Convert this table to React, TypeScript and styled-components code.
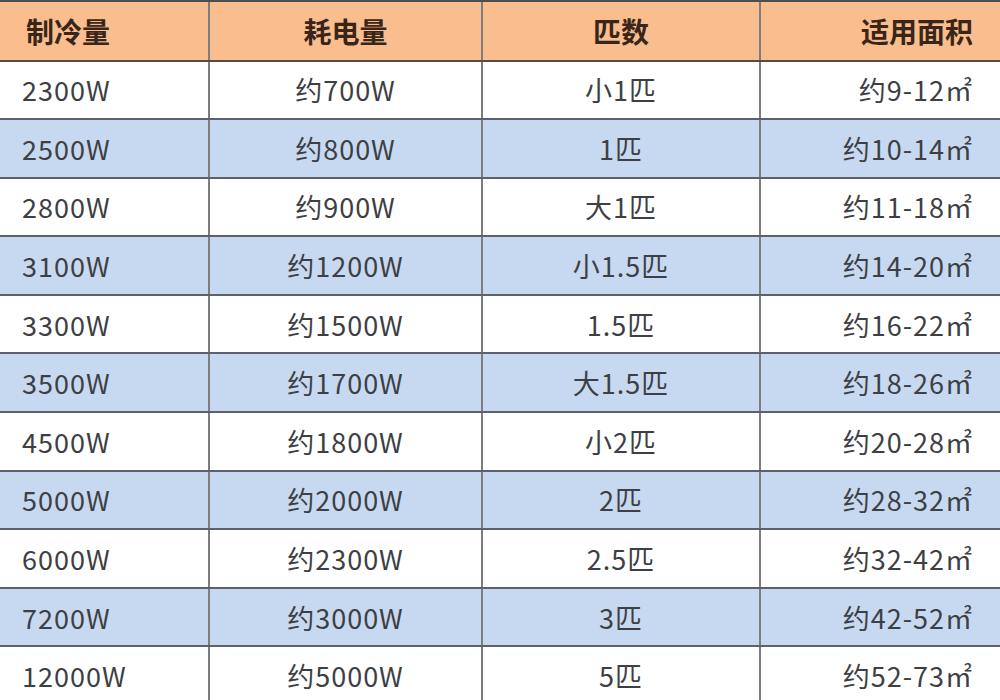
import styled, { createGlobalStyle } from "styled-components";

const GlobalStyle = createGlobalStyle`
  html, body {
    margin: 0;
    padding: 0;
    background: #ffffff;
    overflow: hidden;
  }
`;

type Align = "left" | "center" | "right";

const rows: [string, string, string, string][] = [
  ["2300W", "约700W", "小1匹", "约9-12㎡"],
  ["2500W", "约800W", "1匹", "约10-14㎡"],
  ["2800W", "约900W", "大1匹", "约11-18㎡"],
  ["3100W", "约1200W", "小1.5匹", "约14-20㎡"],
  ["3300W", "约1500W", "1.5匹", "约16-22㎡"],
  ["3500W", "约1700W", "大1.5匹", "约18-26㎡"],
  ["4500W", "约1800W", "小2匹", "约20-28㎡"],
  ["5000W", "约2000W", "2匹", "约28-32㎡"],
  ["6000W", "约2300W", "2.5匹", "约32-42㎡"],
  ["7200W", "约3000W", "3匹", "约42-52㎡"],
  ["12000W", "约5000W", "5匹", "约52-73㎡"],
];

const aligns: Align[] = ["left", "center", "center", "right"];

const Table = styled.div`
  width: 1000px;
  border-top: 2px solid #4d4d4d;
  font-family: "Noto Sans CJK SC", "Noto Sans", sans-serif;
`;

const Row = styled.div<{ $tone: "head" | "blue" | "white" }>`
  display: grid;
  grid-template-columns: 210px 273px 278px 1fr;
  box-sizing: border-box;
  height: ${(p) => (p.$tone === "head" ? "59.5px" : "58.6px")};
  border-bottom: 2px solid ${(p) => (p.$tone === "head" ? "#5a4a40" : "#5b626b")};
  background: ${(p) =>
    p.$tone === "head" ? "#f9bd8e" : p.$tone === "blue" ? "#c6d9f0" : "#ffffff"};
`;

const Cell = styled.div<{ $align: Align; $head?: boolean }>`
  display: flex;
  align-items: center;
  justify-content: ${(p) =>
    p.$align === "left" ? "flex-start" : p.$align === "right" ? "flex-end" : "center"};
  padding: ${(p) =>
    p.$align === "left"
      ? `0 0 0 ${p.$head ? 26 : 22}px`
      : p.$align === "right"
        ? "0 27px 0 0"
        : "0"};
  border-right: 2px solid #7d7d7d;
  font-size: ${(p) => (p.$head ? "28px" : "27px")};
  font-weight: ${(p) => (p.$head ? 700 : 400)};
  letter-spacing: ${(p) => (p.$head ? "0" : "1px")};
  color: ${(p) => (p.$head ? "#3a2618" : "#3d3f44")};
  white-space: nowrap;

  &:last-child {
    border-right: none;
  }
`;

const App = () => {
  return (
    <>
      <GlobalStyle />
      <Table>
        <Row $tone="head">
          {["制冷量", "耗电量", "匹数", "适用面积"].map((h, i) => (
            <Cell key={h} $align={aligns[i]} $head>
              {h}
            </Cell>
          ))}
        </Row>
        {rows.map((r, ri) => (
          <Row key={r[0]} $tone={ri % 2 === 1 ? "blue" : "white"}>
            {r.map((v, ci) => (
              <Cell key={ci} $align={aligns[ci]}>
                {v}
              </Cell>
            ))}
          </Row>
        ))}
      </Table>
    </>
  );
};

export default App;
